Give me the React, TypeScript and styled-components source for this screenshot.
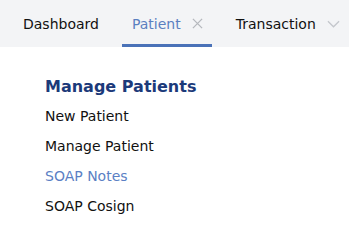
import { createGlobalStyle } from "styled-components";
import styled from "styled-components";

const GlobalStyle = createGlobalStyle`
  body {
    margin: 0;
    background: #ffffff;
    font-family: "DejaVu Sans", Verdana, sans-serif;
  }
`;

type TabProps = { $active?: boolean };

const App = () => {
  return (
    <>
      <GlobalStyle />
      <TabBar>
        <Tab>Dashboard</Tab>
        <Tab $active>
          Patient
          <CloseIcon viewBox="0 0 12 12">
            <path d="M1 1 L11 11 M11 1 L1 11" />
          </CloseIcon>
        </Tab>
        <Tab>
          Transaction
          <ChevronIcon viewBox="0 0 14 8">
            <path d="M1 1 L7 7 L13 1" />
          </ChevronIcon>
        </Tab>
      </TabBar>
      <Menu>
        <MenuTitle>Manage Patients</MenuTitle>
        <MenuItem>New Patient</MenuItem>
        <MenuItem>Manage Patient</MenuItem>
        <MenuItem $active>SOAP Notes</MenuItem>
        <MenuItem>SOAP Cosign</MenuItem>
      </Menu>
    </>
  );
};
export default App;

const TabBar = styled.div`
  display: flex;
  align-items: stretch;
  gap: 14px;
  height: 47px;
  padding-left: 13px;
  background-color: #f3f4f6;
`;

const Tab = styled.div<TabProps>`
  display: flex;
  align-items: center;
  gap: 11px;
  padding: 3px 9px 0 10px;
  font-size: 14px;
  color: ${(p) => (p.$active ? "#5b7fc0" : "#111111")};
  border-bottom: 3px solid ${(p) => (p.$active ? "#4a72b8" : "transparent")};
  box-sizing: border-box;
`;

const CloseIcon = styled.svg`
  width: 11px;
  height: 11px;
  fill: none;
  stroke: #b5b8bd;
  stroke-width: 1.4;
`;

const ChevronIcon = styled.svg`
  width: 13px;
  height: 8px;
  fill: none;
  stroke: #c4c7cc;
  stroke-width: 1.4;
`;

const Menu = styled.div`
  display: flex;
  flex-direction: column;
  padding: 30px 0 0 45px;
`;

const MenuTitle = styled.h2`
  margin: 0 0 10px;
  font-size: 16px;
  font-weight: bold;
  color: #1c3a7a;
`;

const MenuItem = styled.div<TabProps>`
  height: 30px;
  line-height: 20px;
  font-size: 14px;
  color: ${(p) => (p.$active ? "#5b7fc4" : "#111111")};
`;
